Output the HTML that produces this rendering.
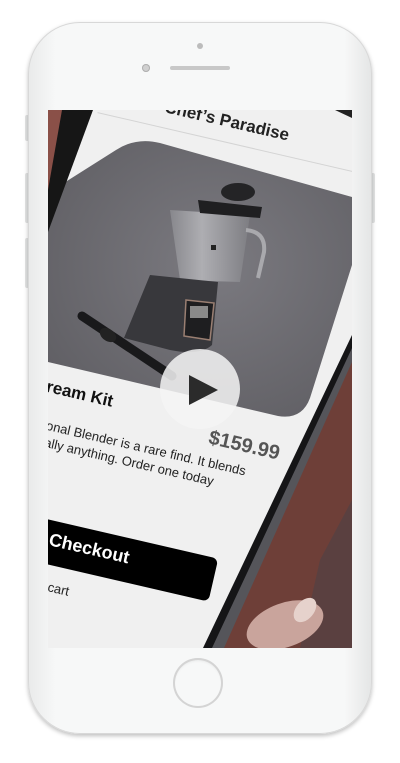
<!DOCTYPE html>
<html><head><meta charset="utf-8"><style>
html,body{margin:0;padding:0;background:#fff;width:400px;height:763px;overflow:hidden;font-family:"Liberation Sans",sans-serif}
.abs{position:absolute}
#phone{left:28px;top:22px;width:344px;height:712px;border-radius:52px;background:linear-gradient(90deg,#e9eaea,#f7f8f8 8%,#f7f8f8 92%,#e4e5e5);box-shadow:0 2px 4px rgba(0,0,0,.25),inset 0 0 0 1px #d8d8d8}
.btn{background:#e2e3e3;border-radius:2px}
#screen{left:48px;top:110px;width:304px;height:538px;overflow:hidden;background:#f0f0f0}
#rot{left:-48px;top:-110px;width:400px;height:763px;transform-origin:200px 380px;transform:rotate(13deg)}
</style></head><body>
<div class="abs btn" style="left:25px;top:115px;width:4px;height:26px"></div>
<div class="abs btn" style="left:25px;top:173px;width:4px;height:50px"></div>
<div class="abs btn" style="left:25px;top:238px;width:4px;height:50px"></div>
<div class="abs btn" style="left:371px;top:173px;width:4px;height:50px"></div>
<div id="phone" class="abs"></div>
<div class="abs" style="left:197px;top:43px;width:6px;height:6px;border-radius:50%;background:#bcbcbc"></div>
<div class="abs" style="left:142px;top:64px;width:8px;height:8px;border-radius:50%;background:#d0d0d0;box-shadow:inset 0 0 0 1px #b0b0b0"></div>
<div class="abs" style="left:170px;top:66px;width:60px;height:4px;border-radius:3px;background:#c8c8c8"></div>
<div class="abs" style="left:173px;top:658px;width:50px;height:50px;border-radius:50%;background:#f7f8f8;box-shadow:inset 0 0 0 2px #d4d4d4,inset 0 2px 3px rgba(0,0,0,.1)"></div>

<div id="screen" class="abs">
 <div id="rot" class="abs">
  <div class="abs" style="left:88px;top:112px;width:160px;text-align:center;font-weight:bold;font-size:17px;color:#222">Chef’s Paradise</div>
  <div class="abs" style="left:40px;top:142px;width:300px;height:1px;background:#d4d4d4"></div>
  <div class="abs" style="left:-20px;top:411px;width:140px;text-align:right;font-weight:bold;font-size:17px;color:#111">Dream Kit</div>
  <div class="abs" style="left:180px;top:423px;width:114px;text-align:right;font-weight:bold;font-size:20px;color:#555">$159.99</div>
  <div class="abs" style="left:-80px;top:451px;width:345px;text-align:right;font-size:13px;color:#222;white-space:nowrap">The Professional Blender is a rare find. It blends</div>
  <div class="abs" style="left:-80px;top:468px;width:316px;text-align:right;font-size:13px;color:#222;white-space:nowrap">virtually anything. Order one today</div>
  <div class="abs" style="left:-54px;top:550px;width:312px;height:44px;border-radius:6px;background:#000"></div>
  <div class="abs" style="left:-34px;top:559px;width:205px;text-align:right;font-size:18px;font-weight:bold;color:#fff">Fast Checkout</div>
  <div class="abs" style="left:-26px;top:608px;width:146px;text-align:right;font-size:13px;color:#222">Add to cart</div>
 </div>
 <svg class="abs" style="left:0;top:0" width="304" height="538" viewBox="48 110 304 538">
  <defs>
   <radialGradient id="g" cx="0.55" cy="0.45" r="0.7"><stop offset="0" stop-color="#7b7a80"/><stop offset="1" stop-color="#5f5e63"/></radialGradient>
   <linearGradient id="jar" x1="0" x2="1"><stop offset="0" stop-color="#8a8a8f"/><stop offset=".4" stop-color="#b4b4b8"/><stop offset="1" stop-color="#7e7e83"/></linearGradient>
  </defs>
  <path d="M48,193 L116,150 Q136,137 160,143 L352,197 L352,265 L310,398 Q302,420 278,416 L48,362 Z" fill="url(#g)"/>
  <path d="M82,316 L172,376" stroke="#19191b" stroke-width="9" stroke-linecap="round"/>
  <ellipse cx="108" cy="335" rx="9" ry="6" fill="#222" transform="rotate(35 108 335)"/>
  <path d="M170,210 L250,215 L240,282 L180,280 Z" fill="url(#jar)" opacity=".9"/>
  <path d="M246,230 Q266,232 264,252 L258,278" stroke="#a9a9ad" stroke-width="4" fill="none"/>
  <rect x="211" y="245" width="5" height="5" fill="#222"/>
  <path d="M198,200 L262,207 L260,218 L200,213 Z" fill="#1f1f21"/>
  <ellipse cx="238" cy="192" rx="17" ry="9" fill="#242426"/>
  <path d="M150,275 L218,282 L212,345 Q200,356 170,350 L124,338 Z" fill="#38383c"/>
  <path d="M186,300 L214,303 L210,340 L184,336 Z" fill="#1e1e20" stroke="#9a7f72" stroke-width="1.5"/>
  <rect x="190" y="306" width="18" height="12" fill="#8a8a8a"/>
  <polygon points="48,110 93,110 48,232" fill="#161616"/>
  <polygon points="48,110 62,110 48,190" fill="#8a5048"/>
  <polygon points="352,335 352,648 203,648" fill="#151517"/>
  <polygon points="352,348 352,648 212,648" fill="#55555a"/>
  <polygon points="352,362 352,648 224,648" fill="#6e3f38"/>
  <polygon points="352,500 352,648 300,648 320,560" fill="#5a4040"/>
  <ellipse cx="285" cy="625" rx="40" ry="22" fill="#c9a49c" transform="rotate(-20 285 625)"/>
  <ellipse cx="305" cy="610" rx="14" ry="9" fill="#e6d2cc" transform="rotate(-50 305 610)"/>
  <polygon points="335,110 352,110 352,118" fill="#222"/>
 </svg>
 <div class="abs" style="left:112px;top:239px;width:80px;height:80px;border-radius:50%;background:rgba(245,245,245,.85)"></div>
 <svg class="abs" style="left:138px;top:263px" width="34" height="34" viewBox="0 0 34 34"><polygon points="3,2 32,17 3,32" fill="#2b2b2b"/></svg>
</div>
</body></html>
